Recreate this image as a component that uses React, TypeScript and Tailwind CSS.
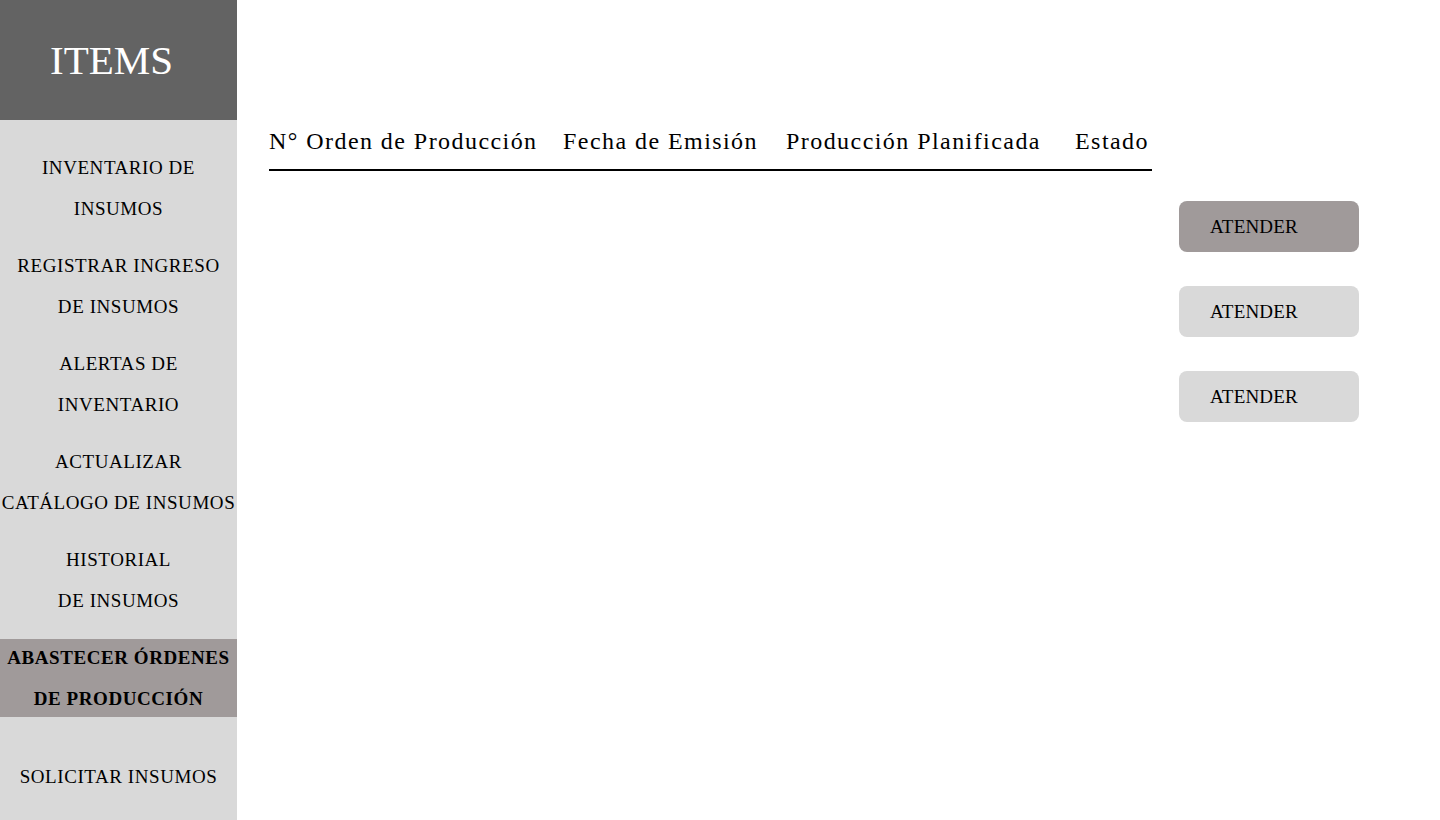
const serif = { fontFamily: '"Liberation Serif", "Times New Roman", serif' };

const navItems = [
  { lines: ["INVENTARIO DE", "INSUMOS"] },
  { lines: ["REGISTRAR INGRESO", "DE INSUMOS"] },
  { lines: ["ALERTAS DE", "INVENTARIO"] },
  { lines: ["ACTUALIZAR", "CATÁLOGO DE INSUMOS"] },
  { lines: ["HISTORIAL", "DE INSUMOS"] },
];

const columns = [
  { label: "N° Orden de Producción", width: "w-[294px]" },
  { label: "Fecha de Emisión", width: "w-[223px]" },
  { label: "Producción Planificada", width: "w-[289px]" },
  { label: "Estado", width: "w-[77px]" },
];

const Sidebar = () => {
  return (
    <aside className="w-[237px] h-[820px] shrink-0 bg-[#d9d9d9] flex flex-col">
      {/* Title */}
      <div className="h-[120px] bg-[#636363] flex items-center justify-center pr-[14px]">
        <h1 className="text-[41px] text-white leading-none">ITEMS</h1>
      </div>

      {/* Menu */}
      <nav className="flex flex-col gap-4 pt-[27px] text-[19px] tracking-[0.03em] text-black text-center">
        {navItems.map((item) => (
          <a key={item.lines[0]} href="#" className="block leading-[41px] whitespace-nowrap">
            {item.lines.map((l) => (
              <div key={l}>{l}</div>
            ))}
          </a>
        ))}
      </nav>
      <a
        href="#"
        className="mt-[18px] h-[78px] bg-[#a09a9a] flex flex-col items-center justify-center text-[19px] tracking-[0.03em] font-bold leading-[41px] text-black whitespace-nowrap"
      >
        <div>ABASTECER ÓRDENES</div>
        <div>DE PRODUCCIÓN</div>
      </a>
      <a href="#" className="mt-[39px] text-center text-[19px] tracking-[0.03em] leading-[41px] text-black">
        SOLICITAR INSUMOS
      </a>
    </aside>
  );
};

export default function App() {
  return (
    <div className="flex w-[1440px] h-[820px] bg-white overflow-hidden" style={serif}>
      <Sidebar />

      <main className="flex pl-[32px] pt-[122px]">
        {/* Table header */}
        <div className="w-[883px] h-[49px] border-b-2 border-black flex items-start pt-[4px] self-start">
          {columns.map((c) => (
            <div
              key={c.label}
              className={`${c.width} text-[24px] tracking-[0.06em] leading-[30px] text-black whitespace-nowrap`}
            >
              {c.label}
            </div>
          ))}
        </div>

        {/* Actions */}
        <div className="ml-[27px] mt-[79px] flex flex-col gap-[34px]">
          <button className="w-[180px] h-[51px] rounded-lg bg-[#a09a9a] pr-[30px] pt-[2px] text-[19px] tracking-[0.01em] text-black">
            ATENDER
          </button>
          <button className="w-[180px] h-[51px] rounded-lg bg-[#d9d9d9] pr-[30px] pt-[2px] text-[19px] tracking-[0.01em] text-black">
            ATENDER
          </button>
          <button className="w-[180px] h-[51px] rounded-lg bg-[#d9d9d9] pr-[30px] pt-[2px] text-[19px] tracking-[0.01em] text-black">
            ATENDER
          </button>
        </div>
      </main>
    </div>
  );
}
